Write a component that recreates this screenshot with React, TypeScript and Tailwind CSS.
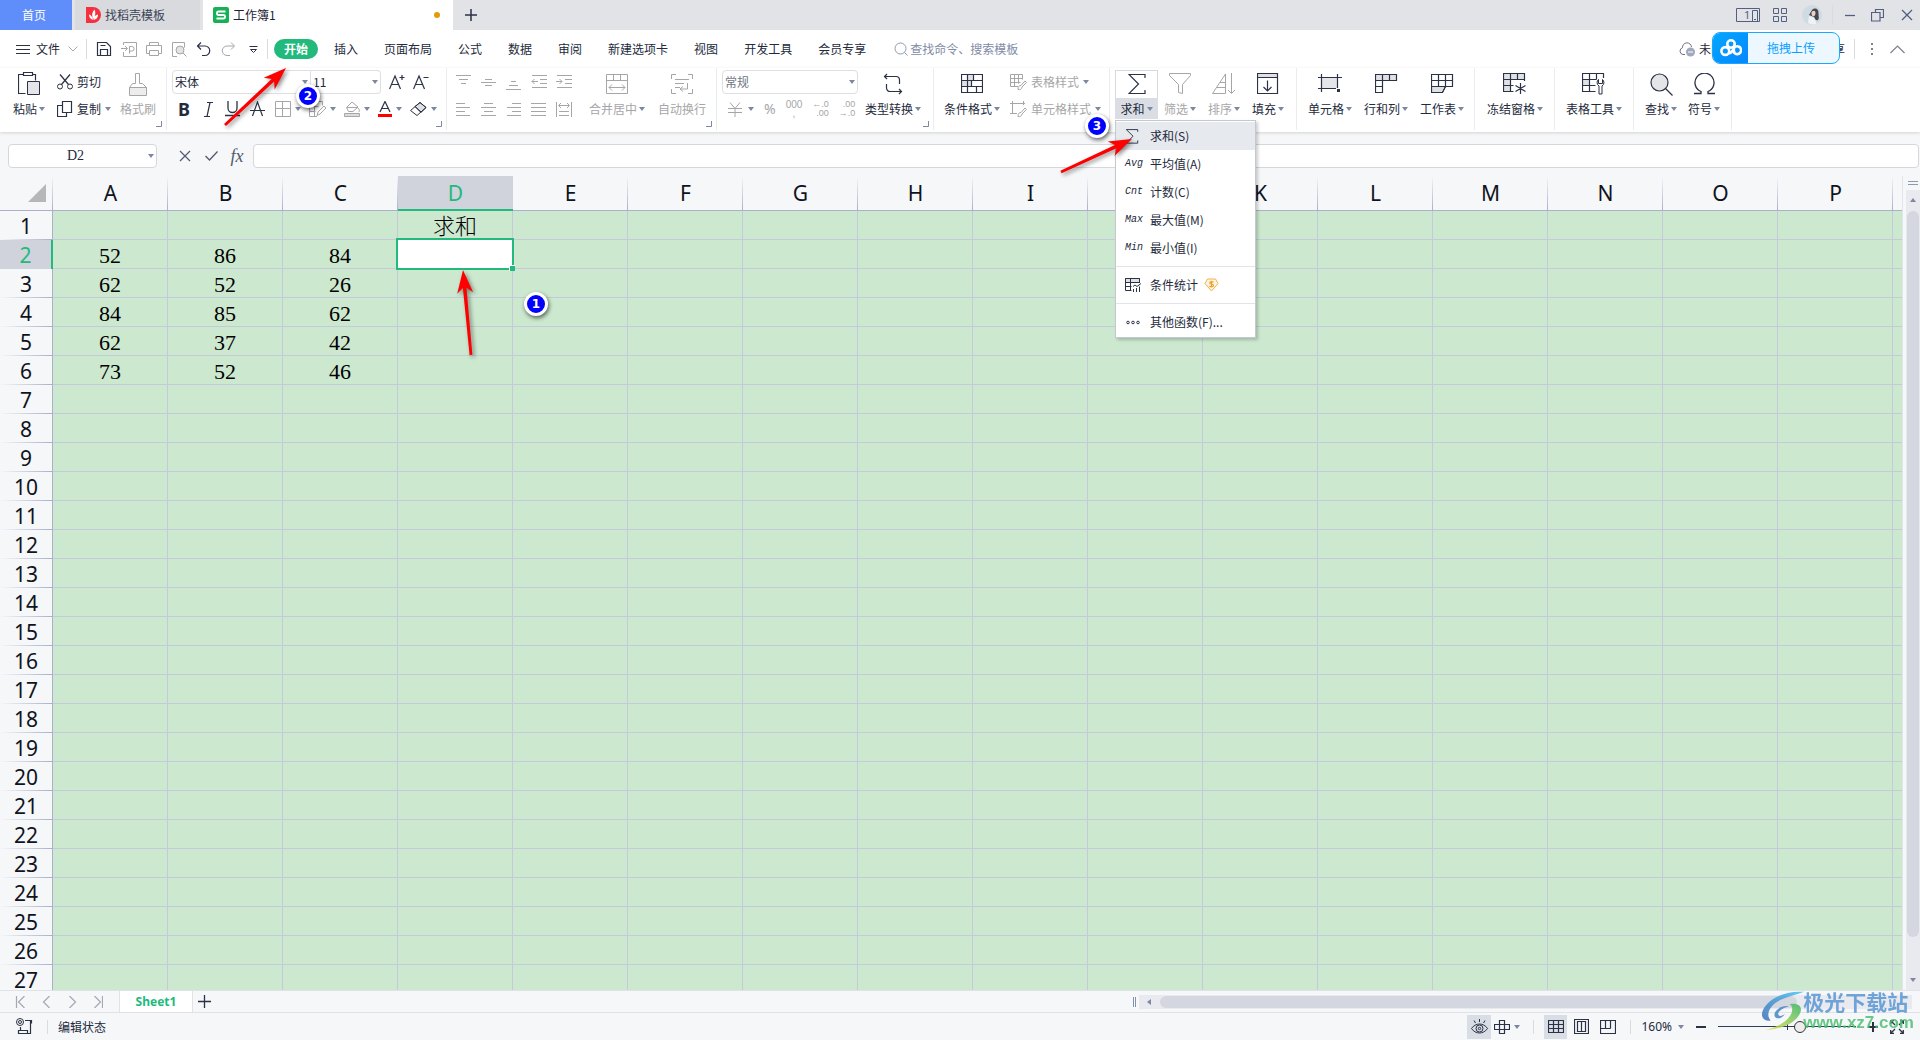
import { ReactNode } from 'react'
import clsx from 'clsx'

const INK = '#2b3245'
const MUTED = '#a6a6a8'

interface IconProps {
  w: number
  h: number
  color?: string
  children: ReactNode
}

const Icon = ({ w, h, color = INK, children }: IconProps) => (
  <svg
    width={w}
    height={h}
    viewBox={`0 0 ${w} ${h}`}
    fill="none"
    stroke={color}
    strokeWidth={1}
    className="shrink-0"
    aria-hidden="true"
  >
    {children}
  </svg>
)

const Caret = () => (
  <svg width="6" height="4" viewBox="0 0 6 4" className="shrink-0" aria-hidden="true">
    <path d="M0 0h6L3 4z" fill="#7d879f" />
  </svg>
)

const Corner = () => (
  <button aria-label="更多设置" className="absolute right-1 bottom-1 p-px">
    <Icon w={6} h={6} color="#7d879f">
      <path d="M5.5 0v5.5H0" />
    </Icon>
  </button>
)

const Divider = ({ className }: { className?: string }) => (
  <span className={clsx('w-px shrink-0 bg-[#d9dbe0]', className)} />
)

/* ---------- quick access ---------- */

const quickActions: { name: string; icon: ReactNode }[] = [
  {
    name: '保存',
    icon: (
      <Icon w={16} h={16}>
        <path d="M1.5 1.5h9l4 4v9h-13zM4.5 14.5v-6h7v6M4.5 4.5h5" strokeWidth="1.2" />
      </Icon>
    ),
  },
  {
    name: '输出为PDF',
    icon: (
      <Icon w={16} h={16} color={MUTED}>
        <path d="M2.5 4V1.5h13v14h-13V11M0 7.5h6M4 5l2.5 2.5L4 10M8.5 12.5v-7h2.3a2.3 2.3 0 010 4.6H8.5" />
      </Icon>
    ),
  },
  {
    name: '打印',
    icon: (
      <Icon w={16} h={16} color={MUTED}>
        <path d="M3.5 4V1.5h9V4M3.5 12.5h-3v-8h15v8h-3M3.5 9.5h9v5h-9z" />
      </Icon>
    ),
  },
  {
    name: '打印预览',
    icon: (
      <Icon w={16} h={16} color={MUTED}>
        <path d="M6 15.5H1.5v-14h12v5" />
        <circle cx="9" cy="9" r="4" fill="#e4e4e6" />
        <path d="M12 12l3.5 3.5" />
      </Icon>
    ),
  },
  {
    name: '撤销',
    icon: (
      <Icon w={15} h={15}>
        <path d="M5 .5L1.5 4 5 7.5M2 4h7a4.7 4.7 0 010 9.5H6" strokeWidth="1.2" />
      </Icon>
    ),
  },
  {
    name: '恢复',
    icon: (
      <Icon w={15} h={15} color={MUTED}>
        <path d="M10 .5L13.5 4 10 7.5M13 4H6a4.7 4.7 0 000 9.5h3" />
      </Icon>
    ),
  },
  {
    name: '自定义快速访问',
    icon: (
      <Icon w={9} h={9}>
        <path d="M.5 1.5h8M1.5 4.5h6l-3 3z" />
      </Icon>
    ),
  },
]

const menuTabs = ['插入', '页面布局', '公式', '数据', '审阅', '新建选项卡', '视图', '开发工具', '会员专享']

/* ---------- ribbon icons ---------- */

const pasteIcon = (
  <Icon w={22} h={24}>
    <path d="M5.5 2.5h-5v19h7M14.5 2.5h3v6M5.5.5h9v3h-9z" strokeWidth="1.2" />
    <path d="M9.5 9.5h12v13h-12z" fill="#e4e5e9" />
  </Icon>
)

const painterIcon = (
  <Icon w={20} h={25} color={MUTED}>
    <path d="M7.5 11.5v-10h4v10h3l4 4h-17l3-4z" />
    <path d="M1.5 15.5h17v8h-17z" fill="#ededee" />
  </Icon>
)

const cutIcon = (
  <Icon w={16} h={16}>
    <circle cx="3" cy="12.5" r="2.5" />
    <circle cx="13" cy="12.5" r="2.5" />
    <path d="M4.5 10.5L13 .5M11.5 10.5L3 .5" strokeWidth="1.2" />
  </Icon>
)

const copyIcon = (
  <Icon w={16} h={16}>
    <path d="M5.5.5h9v11h-9zM5.5 4.5h-5v11h9v-4" strokeWidth="1.2" />
  </Icon>
)

const mergeIcon = (
  <Icon w={22} h={20} color={MUTED}>
    <path d="M.5.5h21v19H.5zM.5 6.5h21M7.5.5v6M14.5.5v6M3 13.5h16M6 10.5l-3 3 3 3M16 10.5l3 3-3 3" />
  </Icon>
)

const wrapIcon = (
  <Icon w={22} h={20} color={MUTED}>
    <path d="M5 .5H.5V5M17 .5h4.5V5M5 19.5H.5V15M17 19.5h4.5V15M4 5.5h14M4 9.5h9M4 13.5h5M16.5 9v6H9M12 12.5L9 15l3 2.5" />
  </Icon>
)

const convertIcon = (
  <Icon w={20} h={22}>
    <path
      d="M4 1L1.5 3.5 4 6M2 3.5h11A3.5 3.5 0 0116.5 7v4M16 21l2.5-2.5L16 16M18 18.5H7A3.5 3.5 0 013.5 15v-4"
      strokeWidth="1.2"
    />
  </Icon>
)

const conditionIcon = (
  <Icon w={22} h={20}>
    <path d="M6.5.5h6v6h-6zM.5 6.5h10v6H.5z" fill="#e0e1e5" stroke="none" />
    <path d="M.5.5h21v18H.5zM.5 6.5h21M.5 12.5h21M6.5.5v18M12.5.5v6M10.5 6.5v6M15.5 12.5v6" strokeWidth="1.2" />
  </Icon>
)

const sigmaIcon = (
  <Icon w={18} h={21}>
    <path d="M17 4V.5H1L10.5 10 1 19.5h16V16" strokeWidth="1.2" />
  </Icon>
)

const filterIcon = (
  <Icon w={22} h={22} color={MUTED}>
    <path d="M.5.5h21v2l-8 9v9l-4-1v-8l-9-9z" />
  </Icon>
)

const sortIcon = (
  <Icon w={24} h={22} color={MUTED}>
    <path d="M13.5 20.5V1L.5 20.5zM5 14.5h8.5M8 9.5h5.5M19.5 0v20M16 17l3.5 3.5L23 17" />
  </Icon>
)

const fillIcon = (
  <Icon w={22} h={22}>
    <path d="M.5.5h20v4H.5z" fill="#e0e1e5" />
    <path d="M.5.5h20v20H.5zM10.5 7.5v10M6.5 14l4 4 4-4" strokeWidth="1.2" />
  </Icon>
)

const cellIcon = (
  <Icon w={24} h={20}>
    <path d="M3.5 3.5h16v11h-16z" fill="#e4e5e9" stroke="none" />
    <path d="M0 3.5h24M3.5 0v18M19.5 0v14M0 14.5h18" strokeWidth="1.2" />
    <path d="M19 15h3v3h-3z" fill={INK} stroke="none" />
  </Icon>
)

const rowColIcon = (
  <Icon w={23} h={20}>
    <path d="M.5.5h21v6H.5z" fill="#e0e1e5" />
    <path d="M.5.5h21v6h-14v12h-7zM7.5.5v6M14.5.5v6M.5 6.5h7M.5 12.5h7" strokeWidth="1.2" />
  </Icon>
)

const sheetIcon = (
  <Icon w={23} h={20}>
    <path d="M.5 12.5h14l-3 6H.5z" fill="#e0e1e5" />
    <path d="M.5.5h21v12H.5zM.5 6.5h21M7.5.5v12M14.5.5v12M.5 12.5v6h11l3-6" strokeWidth="1.2" />
  </Icon>
)

const freezeIcon = (
  <Icon w={24} h={22}>
    <path d="M.5.5h21v6h-14v12h-7z" fill="#e0e1e5" stroke="none" />
    <path
      d="M21.5 8V.5H.5v18h10M.5 6.5h21M7.5.5v18M14.5.5v6M.5 12.5h10M17.5 10v11M12.5 12.5l10 6M22.5 12.5l-10 6"
      strokeWidth="1.2"
    />
  </Icon>
)

const toolsIcon = (
  <Icon w={24} h={22}>
    <path d="M.5 6.5h7v6h-7z" fill="#e0e1e5" stroke="none" />
    <path d="M21.5 5V.5H.5v18h13M.5 6.5h14M7.5.5v18M14.5.5v6M.5 12.5h13" strokeWidth="1.2" />
    <path d="M16.5 6.5A4 4 0 0017 13v8h3v-8a4 4 0 00.5-6.5v4h-4z" fill="#fff" />
  </Icon>
)

const findIcon = (
  <Icon w={23} h={23}>
    <circle cx="9.5" cy="9.5" r="8.5" fill="#e4e5e9" strokeWidth="1.2" />
    <path d="M15.5 15.5l7 7" strokeWidth="1.2" />
  </Icon>
)

const omegaIcon = (
  <Icon w={21} h={22}>
    <path d="M0 20.5h7v-2a9.5 9.5 0 117 0v2h7" strokeWidth="1.3" />
  </Icon>
)

const tableStyleIcon = (
  <Icon w={17} h={17} color={MUTED}>
    <path d="M8 12.5H.5V.5h12v5M.5 4.5h12M.5 8.5h10M4.5.5v12M8.5.5v9M8 15.5c0-3 1-4 3-4L15 7l1.5 1.5L12 13c0 2-2 3-4 2.5z" />
  </Icon>
)

const cellStyleIcon = (
  <Icon w={17} h={17} color={MUTED}>
    <path d="M0 2.5h15M2.5 0v13M13.5 0v4M0 12.5h7M8 15.5c0-3 1-4 3-4L15 7l1.5 1.5L12 13c0 2-2 3-4 2.5z" />
  </Icon>
)

/* each line is [x1, x2, y] */
const lineIcon = (lines: number[][]) => (
  <Icon w={15} h={15} color={MUTED}>
    {lines.map(([a, b, y]) => (
      <path key={y} d={`M${a} ${y + 0.5}H${b}`} />
    ))}
  </Icon>
)

const alignTop = [
  { name: '顶端对齐', icon: lineIcon([[0, 15, 0], [3, 12, 4], [5, 10, 8]]) },
  { name: '垂直居中', icon: lineIcon([[4, 11, 4], [0, 15, 7], [4, 11, 10]]) },
  { name: '底端对齐', icon: lineIcon([[5, 10, 6], [3, 12, 10], [0, 15, 14]]) },
  {
    name: '减少缩进量',
    icon: (
      <Icon w={16} h={15} color={MUTED}>
        <path d="M1 .5h15M9 4.5h7M9 8.5h7M1 12.5h15M1 6.5h6M3.5 4L1 6.5 3.5 9" />
      </Icon>
    ),
  },
  {
    name: '增加缩进量',
    icon: (
      <Icon w={16} h={15} color={MUTED}>
        <path d="M1 .5h15M9 4.5h7M9 8.5h7M1 12.5h15M0 6.5h6M3.5 4L6 6.5 3.5 9" />
      </Icon>
    ),
  },
]

const alignBottom = [
  { name: '左对齐', icon: lineIcon([[0, 9, 1], [0, 14, 5], [0, 9, 9], [0, 14, 13]]) },
  { name: '水平居中', icon: lineIcon([[3, 12, 1], [0, 15, 5], [3, 12, 9], [0, 15, 13]]) },
  { name: '右对齐', icon: lineIcon([[6, 15, 1], [1, 15, 5], [6, 15, 9], [1, 15, 13]]) },
  { name: '两端对齐', icon: lineIcon([[0, 15, 1], [0, 15, 5], [0, 15, 9], [0, 15, 13]]) },
  {
    name: '分散对齐',
    icon: (
      <Icon w={16} h={15} color={MUTED}>
        <path d="M.5 0v15M15.5 0v15M3 3.5h10M5 1L2.5 3.5 5 6M11 1l2.5 2.5L11 6M3 9.5h10M3 13.5h10" />
      </Icon>
    ),
  },
]

const borderIcon = (
  <Icon w={16} h={16} color={MUTED}>
    <path d="M.5.5h15v15H.5zM7.5.5v15M.5 7.5h15" />
  </Icon>
)

const drawIcon = (
  <Icon w={17} h={16} color={MUTED}>
    <path d="M8 15.5H.5V.5h13v4M.5 5.5h9M5.5.5v15M.5 10.5h6M8 14.5L9 11l6-6 2 2-6 6z" />
  </Icon>
)

const bucketIcon = (
  <Icon w={16} h={16} color={MUTED}>
    <path d="M2.5 6.5L8 1l6 5-5 4.5H4.5zM3 6.5h11M14 7c2 2 1.5 4 .5 4" />
    <path d="M.5 12.5h15v3H.5z" fill="#dcdcde" />
  </Icon>
)

const eraserIcon = (
  <Icon w={17} h={15}>
    <path d="M5 4.5l5-4 6 5-5 5z" fill="#dfe0e4" />
    <path d="M.5 8.5L10 .5l6 5-9 8zM5 4.5l6 5.5" />
  </Icon>
)

interface RibbonButtonProps {
  label: string
  icon: ReactNode
  muted?: boolean
  caret?: boolean
}

const BigButton = ({ label, icon, muted, caret = true }: RibbonButtonProps) => (
  <button className="flex flex-col items-center whitespace-nowrap">
    <span className="flex h-7 items-center">{icon}</span>
    <span className={clsx('flex h-[21px] items-center gap-[2px]', muted && 'text-[#a6a6a8]')}>
      {label}
      {caret && <Caret />}
    </span>
  </button>
)

const SmallButton = ({ label, icon, muted, caret = true }: RibbonButtonProps) => (
  <button className={clsx('flex h-6 items-center gap-1 whitespace-nowrap', muted && 'text-[#a6a6a8]')}>
    {icon}
    <span>{label}</span>
    {caret && <Caret />}
  </button>
)

const Group = ({ className, children }: { className?: string; children: ReactNode }) => (
  <div className={clsx('relative flex h-16 shrink-0 items-start pt-[2px]', className)}>
    {children}
    <span className="absolute top-0 right-0 h-[62px] w-px bg-[#ebecee]" />
  </div>
)

const Combo = ({ label, value, className }: { label: string; value: string; className: string }) => (
  <span className="relative flex items-center">
    <select
      aria-label={label}
      className={clsx('h-6 appearance-none border border-[#dddfe3] bg-white pl-[2px] text-xs outline-none', className)}
    >
      <option>{value}</option>
    </select>
    <span className="pointer-events-none absolute right-[3px]">
      <Caret />
    </span>
  </span>
)

/* ---------- sum menu ---------- */

const sumItems = [
  { mark: 'Avg', label: '平均值(A)' },
  { mark: 'Cnt', label: '计数(C)' },
  { mark: 'Max', label: '最大值(M)' },
  { mark: 'Min', label: '最小值(I)' },
]

const menuRow = 'flex h-7 w-full items-center text-left'
const menuMark = 'flex w-[34px] shrink-0 pl-[9px]'

const SumMenu = () => (
  <div
    role="menu"
    className="absolute top-[50px] left-0 z-30 w-[141px] border border-[#c4c8cf] bg-white py-px text-xs shadow-[2px_2px_3px_rgba(0,0,0,0.2)]"
  >
    <button role="menuitem" className={clsx(menuRow, 'bg-[#e6e9ed]')}>
      <span className={menuMark}>
        <svg width="14" height="15" viewBox="0 0 18 21" fill="none" stroke={INK} strokeWidth="1.3" aria-hidden="true">
          <path d="M17 4V.8H1L10.5 10 1 19.8h16V16" />
        </svg>
      </span>
      求和(S)
    </button>
    {sumItems.map((item) => (
      <button key={item.mark} role="menuitem" className={menuRow}>
        <span className={clsx(menuMark, "font-['Liberation_Mono',monospace] text-[10px] italic")}>{item.mark}</span>
        {item.label}
      </button>
    ))}
    <hr className="my-1 border-[#e2e4e8]" />
    <button role="menuitem" className={menuRow}>
      <span className={menuMark}>
        <Icon w={17} h={15}>
          <path d="M.5.5h14v4H.5z" fill="#e0e1e5" />
          <path d="M14.5 5V.5H.5v12h6M.5 4.5h14M.5 8.5h6M5.5.5v12M8.5 14v-3M11.5 14v-4M14.5 14V8.5M8 8.5L10 7l2 1.5 4-3" />
        </Icon>
      </span>
      条件统计
      <svg width="15" height="14" viewBox="0 0 15 14" className="ml-[6px]" aria-hidden="true">
        <path d="M3.5 1h8L14 5.5 7.5 13 1 5.5z" fill="#fff6e6" stroke="#f0b04a" />
        <path
          d="M9.5 4.3c-1-1-3.8-.8-3.8.7 0 1.6 3.8.8 3.8 2.5 0 1.4-2.8 1.6-4 .5M7.5 2.8v6.8"
          fill="none"
          stroke="#f0a02a"
          strokeWidth="1.2"
        />
      </svg>
    </button>
    <hr className="my-1 border-[#e2e4e8]" />
    <button role="menuitem" className={menuRow}>
      <span className={menuMark}>
        <Icon w={16} h={5}>
          <circle cx="3" cy="2.5" r="1.3" />
          <circle cx="8" cy="2.5" r="1.3" />
          <circle cx="13" cy="2.5" r="1.3" />
        </Icon>
      </span>
      其他函数(F)...
    </button>
  </div>
)

/* ---------- sections ---------- */

const TitleBar = () => (
  <header className="flex h-[30px] shrink-0 items-stretch bg-[#e1e3e7] text-xs">
    <button className="w-[72px] bg-[#5f8efb] pr-1 text-white">首页</button>
    <button className="ml-[3px] flex w-[125px] items-center gap-1 bg-[#d8dade] pl-[11px] text-[#3c4356]">
      <svg width="15" height="16" viewBox="0 0 15 16" aria-hidden="true">
        <path d="M0 0h7a8 8 0 010 16H0z" fill="#f5313f" />
        <path
          d="M7 13c-3-1-4-3-4-5.5C5 8 6.5 9.5 7 13zM7 12C5.5 8 6 5 8.5 2.5 10 5.5 9.5 9 7 12zM7.5 13c0-3 1.5-5 4.500-5.5 0 3-1.5 5-4.500 5.5z"
          fill="#fff"
        />
      </svg>
      找稻壳模板
    </button>
    <button className="ml-[3px] flex w-[250px] items-center gap-1 bg-white pr-[13px] pl-[10px] text-[#1c2233]">
      <svg width="16" height="16" viewBox="0 0 16 16" aria-hidden="true">
        <rect width="16" height="16" rx="2" fill="#16b055" />
        <path d="M12.5 4.5h-7a1.5 1.7 0 000 3.5h5a1.5 1.7 0 010 3.5h-7" fill="none" stroke="#fff" strokeWidth="1.8" />
      </svg>
      工作簿1
      <span className="ml-auto size-[6px] rounded-full bg-[#e69a07]" />
    </button>
    <button aria-label="新建标签" className="px-3">
      <Icon w={12} h={12}>
        <path d="M6 0v12M0 6h12" strokeWidth="1.5" />
      </Icon>
    </button>
    <div className="ml-auto flex items-center pr-[7px]">
      <button aria-label="窗口布局">
        <svg width="24" height="15" viewBox="0 0 24 15" fill="none" stroke="#525f7e" aria-hidden="true">
          <path d="M.5.5h23v13H.5zM16.5 2.5h5v11h-5zM18 11.5h2" />
          <text x="8" y="11" fontSize="11" fill="#525f7e" stroke="none" fontFamily="Noto Sans">
            1
          </text>
        </svg>
      </button>
      <button aria-label="应用" className="ml-[13px]">
        <Icon w={14} h={14} color="#525f7e">
          <path d="M.5.5h5v5h-5zM8.5.5h5v5h-5zM.5 8.5h5v5h-5zM8.5 8.5h5v5h-5z" />
        </Icon>
      </button>
      <button aria-label="账户" className="ml-[15px]">
        <svg width="20" height="20" viewBox="0 0 20 20" aria-hidden="true">
          <circle cx="10" cy="10" r="10" fill="#cfdbe2" />
          <path d="M10 5c3-3 7-1 6.5 3 0 4 1 5-.5 7-2 1-3-1-4-3l-5-2z" fill="#4a4650" />
          <path d="M10 6.5c2-1.5 3.5-.5 3.5 1.5s-1 3.5-2.500 3.2S9 8 10 6.500z" fill="#ecd2c8" />
          <path d="M7 11l5 1.5 2.5 6c-3 1.500-6 1-8.500-.5z" fill="#eef3f6" />
        </svg>
      </button>
      <Divider className="ml-[10px] h-5 bg-[#c5c9d1]" />
      <button aria-label="最小化" className="ml-3">
        <Icon w={10} h={11} color="#525f7e">
          <path d="M0 5.5h10" strokeWidth="1.3" />
        </Icon>
      </button>
      <button aria-label="还原" className="ml-4">
        <Icon w={13} h={13} color="#525f7e">
          <path d="M4.5 3V.5h8v8H9M.5 3.5H9V12H.5z" strokeWidth="1.2" />
        </Icon>
      </button>
      <button aria-label="关闭" className="ml-[17px]">
        <Icon w={12} h={12} color="#525f7e">
          <path d="M1 1l10 10M11 1L1 11" strokeWidth="1.3" />
        </Icon>
      </button>
    </div>
  </header>
)

const MenuBar = () => (
  <nav className="relative flex h-[38px] shrink-0 items-center pl-4 text-xs">
    <button className="flex items-center gap-[6px]">
      <Icon w={14} h={11}>
        <path d="M0 1.5h14M0 5.5h14M0 9.5h14" />
      </Icon>
      文件
      <span className="pl-[2px]">
        <Icon w={10} h={6} color={MUTED}>
          <path d="M.5.5L5 5 9.5.5" />
        </Icon>
      </span>
    </button>
    <Divider className="mr-1 ml-2 h-5" />
    <div className="flex items-center">
      {quickActions.map((action) => (
        <button key={action.name} aria-label={action.name} className="flex w-[25px] justify-center">
          {action.icon}
        </button>
      ))}
    </div>
    <Divider className="ml-px h-5" />
    <button className="ml-[6px] h-5 w-11 rounded-full bg-[#22b97d] font-bold text-white">开始</button>
    <div className="flex items-center gap-[26px] pl-4 whitespace-nowrap">
      {menuTabs.map((tab) => (
        <button key={tab}>{tab}</button>
      ))}
    </div>
    <label className="ml-7 flex items-center gap-[2px]">
      <Icon w={14} h={14} color="#8c9ab5">
        <circle cx="6.5" cy="6.5" r="5.5" />
        <path d="M10.5 10.5l3 3" />
      </Icon>
      <input
        aria-label="查找命令"
        placeholder="查找命令、搜索模板"
        className="w-[120px] bg-transparent outline-none placeholder:text-[#7f8ba6]"
      />
    </label>
    <div className="ml-auto flex items-center pr-[15px] whitespace-nowrap">
      <button className="flex items-center gap-1">
        <Icon w={16} h={15} color="#6b7285">
          <path d="M6 12.5H4a3.5 3.5 0 01-.5-6.8A4.5 4.5 0 0112.5 5" />
          <circle cx="11.5" cy="10" r="4.5" fill="#a0a8bb" stroke="none" />
          <path d="M9 10h5" stroke="#fff" />
        </Icon>
        未同步
      </button>
      <button className="ml-[86px]">分享</button>
      <Divider className="ml-[9px] h-5" />
      <button aria-label="更多" className="ml-4">
        <svg width="3" height="12" viewBox="0 0 3 12" fill="#7c8190" aria-hidden="true">
          <path d="M0 0h2v2H0zM0 5h2v2H0zM0 10h2v2H0z" />
        </svg>
      </button>
      <button aria-label="收起功能区" className="ml-4">
        <Icon w={15} h={9} color="#7c8190">
          <path d="M.5 8l7-7 7 7" strokeWidth="1.2" />
        </Icon>
      </button>
    </div>
    <button className="absolute top-[2px] right-20 z-20 flex h-8 w-32 items-stretch overflow-hidden rounded-lg border border-[#1ba6ff] bg-[#ecf7ff] text-[#0a9fff]">
      <span className="flex w-[35px] shrink-0 items-center justify-center bg-linear-to-br from-[#06a7ff] to-[#0886ff]">
        <svg width="22" height="18" viewBox="0 0 22 18" fill="none" stroke="#fff" strokeWidth="2.6" aria-hidden="true">
          <circle cx="11" cy="5" r="3.7" />
          <circle cx="5.3" cy="12" r="3.9" />
          <path d="M13.3 8.3l1 5.5a3.9 3.9 0 10-.8-3.8M8.5 14.2c3-.2 4-1.7 5-4" />
        </svg>
      </span>
      <span className="flex flex-1 items-center justify-center pr-[5px]">拖拽上传</span>
    </button>
  </nav>
)

const Ribbon = () => (
  <section
    aria-label="功能区"
    className="relative z-10 flex h-16 shrink-0 bg-white text-xs shadow-[0_1px_3px_rgba(0,0,0,0.15)]"
  >
    <Group className="w-[167px] gap-3 pl-[13px]">
      <BigButton label="粘贴" icon={pasteIcon} />
      <div className="flex flex-col gap-[3px]">
        <SmallButton label="剪切" icon={cutIcon} caret={false} />
        <SmallButton label="复制" icon={copyIcon} />
      </div>
      <div className="-ml-[3px]">
        <BigButton label="格式刷" icon={painterIcon} muted caret={false} />
      </div>
      <Corner />
    </Group>

    <Group className="w-[280px] flex-col gap-[3px] pl-[5px]">
      <div className="flex items-center">
        <Combo label="字体" value="宋体" className="w-[139px] rounded-l" />
        <Combo label="字号" value="11" className="w-[70px] rounded-r border-l-0" />
        <button aria-label="增大字号" className="ml-2">
          <Icon w={16} h={16}>
            <path d="M.5 15L6 2l5.5 13M2.5 10.5h7M10.5 3.5h5M13 1v5" strokeWidth="1.2" />
          </Icon>
        </button>
        <button aria-label="减小字号" className="ml-2">
          <Icon w={16} h={16}>
            <path d="M.5 15L6 2l5.5 13M2.5 10.5h7M10.5 3.5h5" strokeWidth="1.2" />
          </Icon>
        </button>
      </div>
      <div className="flex h-6 items-center pl-[6px]">
        <button aria-label="加粗" className="w-3 font-['Noto_Sans',sans-serif] text-lg leading-6 font-bold">
          B
        </button>
        <button aria-label="倾斜" className="ml-[14px]">
          <Icon w={9} h={15}>
            <path d="M3 .5h6M0 14.5h6M6 .5l-3 14" strokeWidth="1.2" />
          </Icon>
        </button>
        <button aria-label="下划线" className="ml-3">
          <Icon w={15} h={16}>
            <path d="M3 0v7a4.5 4.5 0 009 0V0M0 14.5h15" strokeWidth="1.3" />
          </Icon>
        </button>
        <button aria-label="删除线" className="ml-[10px]">
          <Icon w={15} h={16}>
            <path d="M2.5 15l5-14 5 14M0 9.5h15" strokeWidth="1.2" />
          </Icon>
        </button>
        <button aria-label="边框" className="ml-[10px] flex items-center gap-1">
          {borderIcon}
          <Caret />
        </button>
        <button aria-label="绘图边框" className="ml-2 flex items-center gap-1">
          {drawIcon}
          <Caret />
        </button>
        <button aria-label="填充颜色" className="ml-2 flex items-center gap-1">
          {bucketIcon}
          <Caret />
        </button>
        <button aria-label="字体颜色" className="ml-2 flex items-center gap-1">
          <Icon w={14} h={16}>
            <path d="M2 11L7 .5 12 11M3.5 7.5h7" strokeWidth="1.2" />
            <path d="M0 14.5h14" stroke="#f00" strokeWidth="3" />
          </Icon>
          <Caret />
        </button>
        <button aria-label="清除" className="ml-2 flex items-center gap-1">
          {eraserIcon}
          <Caret />
        </button>
      </div>
      <Corner />
    </Group>

    <Group className="w-[270px] gap-2 pl-[9px]">
      <div className="flex flex-col gap-[3px]">
        {[alignTop, alignBottom].map((row, i) => (
          <div key={i} className="flex h-6 items-center">
            {row.map((item) => (
              <button key={item.name} aria-label={item.name} className="flex w-[25px]">
                {item.icon}
              </button>
            ))}
          </div>
        ))}
      </div>
      <div className="flex gap-[13px]">
        <BigButton label="合并居中" icon={mergeIcon} muted />
        <BigButton label="自动换行" icon={wrapIcon} muted caret={false} />
      </div>
      <Corner />
    </Group>

    <Group className="w-[217px] gap-[7px] pl-[5px]">
      <div className="flex flex-col gap-[3px]">
        <Combo label="数字格式" value="常规" className="w-[136px] rounded text-[#707784]" />
        <div className="flex h-6 items-center gap-[10px] pl-[6px] text-[#a6a6a8]">
          <button aria-label="货币" className="flex items-center gap-[6px]">
            <Icon w={14} h={15} color={MUTED}>
              <path d="M2 .5l5 6 5-6M7 6.5V15M0 6.5h14M0 10.5h14" />
            </Icon>
            <Caret />
          </button>
          <button aria-label="百分比" className="font-['Noto_Sans',sans-serif] text-sm">
            %
          </button>
          <button className="flex flex-col items-center font-['Liberation_Sans',sans-serif] text-[10px] leading-[9px]">
            <span>000</span>
            <span>,</span>
          </button>
          <button className="flex flex-col items-end font-['Liberation_Sans',sans-serif] text-[9px] leading-[9px]">
            <span>←.0</span>
            <span>.00</span>
          </button>
          <button className="flex flex-col items-end font-['Liberation_Sans',sans-serif] text-[9px] leading-[9px]">
            <span>.00</span>
            <span>→.0</span>
          </button>
        </div>
      </div>
      <BigButton label="类型转换" icon={convertIcon} />
      <Corner />
    </Group>

    <Group className="w-[176px] gap-[10px] pl-[10px]">
      <BigButton label="条件格式" icon={conditionIcon} />
      <div className="flex flex-col gap-[3px]">
        <SmallButton label="表格样式" icon={tableStyleIcon} muted />
        <SmallButton label="单元格样式" icon={cellStyleIcon} muted />
      </div>
    </Group>

    <Group className="w-[187px] gap-[6px] pl-[5px]">
      <div className="relative w-[43px]">
        <button
          className="flex w-full flex-col items-center whitespace-nowrap"
          aria-haspopup="menu"
          aria-expanded="true"
        >
          <span className="flex h-7 w-full items-center justify-center border border-b-0 border-[#d6dae0]">
            {sigmaIcon}
          </span>
          <span className="flex h-[21px] w-full items-center justify-center gap-[2px] bg-[#dadee4]">
            求和
            <Caret />
          </span>
        </button>
        <SumMenu />
      </div>
      <div className="flex gap-3">
        <BigButton label="筛选" icon={filterIcon} muted />
        <BigButton label="排序" icon={sortIcon} muted />
        <BigButton label="填充" icon={fillIcon} />
      </div>
    </Group>

    <Group className="gap-3 px-[11px]">
      <BigButton label="单元格" icon={cellIcon} />
      <BigButton label="行和列" icon={rowColIcon} />
      <BigButton label="工作表" icon={sheetIcon} />
    </Group>
    <Group className="px-3">
      <BigButton label="冻结窗格" icon={freezeIcon} />
    </Group>
    <Group className="pr-3 pl-[11px]">
      <BigButton label="表格工具" icon={toolsIcon} />
    </Group>
    <Group className="gap-[11px] pr-3 pl-[11px]">
      <BigButton label="查找" icon={findIcon} />
      <BigButton label="符号" icon={omegaIcon} />
    </Group>
  </section>
)

const FormulaBar = () => (
  <div className="flex h-11 shrink-0 items-start pt-3 pr-px pl-2">
    <span className="relative flex items-center">
      <input
        aria-label="名称框"
        defaultValue="D2"
        className="h-6 w-[149px] rounded border border-[#d5d7dd] bg-white pr-[14px] text-center font-['Liberation_Serif',serif] text-sm outline-none"
      />
      <span className="absolute right-[3px]">
        <Caret />
      </span>
    </span>
    <div className="flex h-6 items-center pl-[22px]">
      <button aria-label="取消">
        <Icon w={12} h={12} color="#525a6e">
          <path d="M1 1l10 10M11 1L1 11" strokeWidth="1.2" />
        </Icon>
      </button>
      <button aria-label="确认" className="ml-[14px]">
        <Icon w={13} h={10} color="#525a6e">
          <path d="M.5 5l4 4 8-8.5" strokeWidth="1.3" />
        </Icon>
      </button>
      <button
        aria-label="插入函数"
        className="ml-[11px] w-4 font-['Liberation_Serif',serif] text-lg leading-6 text-[#525a6e] italic"
      >
        fx
      </button>
    </div>
    <input
      aria-label="编辑栏"
      className="ml-2 h-6 min-w-0 flex-1 rounded border border-[#d5d7dd] bg-white px-2 outline-none"
    />
  </div>
)

const columns = 'ABCDEFGHIJKLMNOP'.split('')
const rowCount = 27

const cells: Record<string, string> = {
  D1: '求和',
  A2: '52', B2: '86', C2: '84',
  A3: '62', B3: '52', C3: '26',
  A4: '84', B4: '85', C4: '62',
  A5: '62', B5: '37', C5: '42',
  A6: '73', B6: '52', C6: '46',
}

const headerLine =
  'border-b border-b-[#aab0cb] bg-[linear-gradient(to_top,#aab0cb,transparent)] bg-[length:1px_100%] bg-right bg-no-repeat'
const rowLine =
  'border-r border-r-[#aab0cb] bg-[linear-gradient(to_left,#aab0cb,transparent)] bg-[length:100%_1px] bg-bottom bg-no-repeat'

const Sheet = () => (
  <div className="flex min-h-0 flex-1">
    <div className="min-w-0 flex-1 overflow-hidden">
      <table className="w-full table-fixed border-separate border-spacing-0 font-['Noto_Sans',sans-serif] text-[21px] leading-6 text-[#10131c]">
        <colgroup>
          <col className="w-[53px]" />
          {columns.map((c) => (
            <col key={c} className="w-[115px]" />
          ))}
          <col />
        </colgroup>
        <thead>
          <tr className="h-[35px]">
            <th className={headerLine}>
              <button aria-label="全选" className="ml-auto mr-[7px] flex">
                <svg width="18" height="18" viewBox="0 0 18 18" aria-hidden="true">
                  <path d="M18 0v18H0z" fill="#b7b7b7" />
                </svg>
              </button>
            </th>
            {columns.map((c) => (
              <th
                key={c}
                scope="col"
                className={clsx(
                  'p-0 font-normal',
                  c === 'D' ? 'border-b-2 border-[#22b97d] bg-[#d0d3dc] text-[#22b97d]' : headerLine,
                )}
              >
                {c}
              </th>
            ))}
            <th className="border-b border-[#aab0cb]" />
          </tr>
        </thead>
        <tbody>
          {Array.from({ length: rowCount }, (_, i) => i + 1).map((row) => (
            <tr key={row} className="h-[29px]">
              <th
                scope="row"
                className={clsx(
                  'p-0 font-normal',
                  row === 2 ? 'border-r-2 border-[#22b97d] bg-[#d0d3dc] text-[#22b97d]' : rowLine,
                )}
              >
                {row}
              </th>
              {columns.map((c) => (
                <td
                  key={c}
                  className="relative border-r border-b border-[#c4c9dc] bg-[#cce8cf] p-0 pt-1 text-center font-['Liberation_Serif','Noto_Sans_CJK_SC',serif] text-[22px] font-light text-black"
                >
                  {cells[`${c}${row}`]}
                  {c === 'D' && row === 2 && (
                    <span className="absolute -inset-[2px] z-10 border-2 border-[#22b97d] bg-white">
                      <span className="absolute -right-[3px] -bottom-[3px] size-[6px] border-t border-l border-white bg-[#22b97d]" />
                    </span>
                  )}
                </td>
              ))}
              <td className="border-b border-[#c4c9dc] bg-[#cce8cf]" />
            </tr>
          ))}
        </tbody>
      </table>
    </div>
    <div className="flex w-[18px] flex-col items-end border-l border-[#e2e4e8] pl-[3px]">
      <div className="flex h-[14px] w-full flex-col items-center justify-center gap-[2px]">
        <span className="h-px w-[10px] bg-[#8d99b2]" />
        <span className="h-px w-[10px] bg-[#8d99b2]" />
      </div>
      <div className="flex w-full flex-1 flex-col items-center bg-[#e9eaef] py-2">
        <svg width="6" height="4" viewBox="0 0 6 4" aria-hidden="true">
          <path d="M0 4h6L3 0z" fill="#7d879f" />
        </svg>
        <span className="mt-[9px] mb-[41px] w-3 flex-1 rounded-full bg-[#d4d7e0]" />
        <Caret />
      </div>
    </div>
  </div>
)

const sheetNav = [
  { name: '第一张', d: 'M1.5 0v12M9.5 0l-6 6 6 6' },
  { name: '上一张', d: 'M8.5 0l-6 6 6 6' },
  { name: '下一张', d: 'M2.5 0l6 6-6 6' },
  { name: '最后一张', d: 'M1.5 0l6 6-6 6M9.5 0v12' },
]

const SheetTabs = () => (
  <div className="flex h-[23px] shrink-0 items-stretch border-y border-[#e0e2e7] text-xs">
    <div className="flex w-[119px] items-center gap-4 pl-[15px]">
      {sheetNav.map((nav) => (
        <button key={nav.name} aria-label={nav.name}>
          <Icon w={10} h={12} color="#a4a8b2">
            <path d={nav.d} strokeWidth="1.2" />
          </Icon>
        </button>
      ))}
    </div>
    <button className="w-[74px] border-x border-[#e0e2e7] bg-white font-['Noto_Sans',sans-serif] font-bold text-[#22b97d]">
      Sheet1
    </button>
    <button aria-label="新建工作表" className="px-[5px]">
      <Icon w={13} h={13}>
        <path d="M6.5 0v13M0 6.5h13" strokeWidth="1.3" />
      </Icon>
    </button>
    <div className="ml-auto flex w-[41%] items-center pr-2">
      <div className="flex w-[6px] gap-px">
        <span className="h-[10px] w-px bg-[#8292ad]" />
        <span className="h-[10px] w-px bg-[#8292ad]" />
      </div>
      <div className="flex h-[14px] flex-1 items-center bg-[#e9eaef] pl-2">
        <svg width="4" height="6" viewBox="0 0 4 6" aria-hidden="true">
          <path d="M4 0v6L0 3z" fill="#7d879f" />
        </svg>
        <span className="ml-[9px] h-3 w-5/6 rounded-full bg-[#d4d7e0]" />
      </div>
    </div>
  </div>
)

const StatusBar = () => (
  <footer className="flex h-[27px] shrink-0 items-center px-4 text-xs">
    <button aria-label="宏录制">
      <Icon w={17} h={17}>
        <circle cx="4" cy="4" r="3.5" />
        <circle cx="4" cy="4" r="1.5" />
        <path d="M9 2.5h6.5v3M14.5 3v12.5h-12v-3h9v3M4.5 9v3" strokeWidth="1.2" />
      </Icon>
    </button>
    <Divider className="ml-[14px] h-[14px]" />
    <span className="ml-[10px]">编辑状态</span>
    <div className="ml-auto flex items-center">
      <button aria-label="护眼模式" className="flex h-6 w-6 items-center justify-center bg-[#d9dee6]">
        <Icon w={17} h={15}>
          <path d="M.5 9.5c4-6 12-6 16 0-4 6-12 6-16 0zM8.5 0v3M3 1.5L4.5 4M14 1.5L12.5 4" />
          <circle cx="8.5" cy="9.5" r="3.5" />
          <circle cx="8.5" cy="9.5" r="1.2" />
        </Icon>
      </button>
      <button aria-label="阅读模式" className="ml-[3px] flex items-center gap-1">
        <Icon w={16} h={14}>
          <path d="M5.5.5h5v13h-5zM.5 4.5h15v5H.5z" strokeWidth="1.2" />
        </Icon>
        <Caret />
      </button>
      <Divider className="mr-[10px] ml-[13px] h-[14px]" />
      <button aria-label="普通视图" className="flex h-6 w-[23px] items-center justify-center bg-[#d9dee6]">
        <Icon w={16} h={13}>
          <path d="M.5.5h15v12H.5zM.5 4.5h15M.5 8.5h15M5.5.5v12M10.5.5v12" strokeWidth="1.2" />
        </Icon>
      </button>
      <button aria-label="页面布局视图" className="ml-[7px]">
        <Icon w={15} h={15}>
          <path d="M.5.5h14v14H.5zM3.5 2.5h8v10h-8zM7.5 2.5v10" strokeWidth="1.2" />
        </Icon>
      </button>
      <button aria-label="分页预览" className="ml-[11px]">
        <Icon w={16} h={14}>
          <path d="M.5.5h15v13H.5zM5.5.5v8M10.5.5v8M.5 8.5h10" strokeWidth="1.2" />
        </Icon>
      </button>
      <Divider className="ml-[14px] h-[14px]" />
      <button className="ml-[10px] flex items-center gap-[6px] font-['Noto_Sans',sans-serif] text-xs">
        160%
        <Caret />
      </button>
      <button aria-label="缩小" className="ml-3">
        <Icon w={10} h={10}>
          <path d="M0 5h10" strokeWidth="2" />
        </Icon>
      </button>
      <span className="relative ml-3 flex w-[138px] items-center">
        <span className="absolute left-1/2 h-[6px] w-px bg-[#2b3245]" />
        <input
          type="range"
          aria-label="显示比例"
          min={0}
          max={100}
          defaultValue={60}
          className="h-3 w-full appearance-none bg-[linear-gradient(#2b3f5a,#2b3f5a)] bg-[length:100%_1px] bg-center bg-no-repeat [&::-webkit-slider-thumb]:size-3 [&::-webkit-slider-thumb]:appearance-none [&::-webkit-slider-thumb]:rounded-full [&::-webkit-slider-thumb]:border [&::-webkit-slider-thumb]:border-[#333] [&::-webkit-slider-thumb]:bg-[#efecee]"
        />
      </span>
      <button aria-label="放大" className="ml-3">
        <Icon w={10} h={10}>
          <path d="M0 5h10M5 0v10" strokeWidth="2" />
        </Icon>
      </button>
      <button aria-label="全屏" className="ml-3">
        <Icon w={14} h={14}>
          <path
            d="M.7 4V.7H4M10 .7h3.3V4M.7 10v3.3H4M10 13.3h3.3V10M1 1l4 4M13 1L9 5M1 13l4-4M13 13L9 9"
            strokeWidth="1.3"
          />
        </Icon>
      </button>
    </div>
  </footer>
)

/* ---------- tutorial marks ---------- */

const arrows = [
  { from: [471, 355], tip: [463, 270] },
  { from: [225, 125], tip: [286, 68] },
  { from: [1061, 172], tip: [1132, 139] },
]

const Arrow = ({ from, tip }: { from: number[]; tip: number[] }) => {
  const angle = (Math.atan2(tip[1] - from[1], tip[0] - from[0]) * 180) / Math.PI
  const length = Math.hypot(tip[0] - from[0], tip[1] - from[1])
  return (
    <path
      transform={`translate(${from[0]} ${from[1]}) rotate(${angle})`}
      d={`M0 -1.4L${length - 18} -1.8L${length - 23} -8L${length} 0L${length - 23} 8L${length - 18} 1.8L0 1.4z`}
      fill="#fe0000"
    />
  )
}

const badge =
  "absolute flex size-6 items-center justify-center rounded-full border-[3px] border-white bg-[#0000fe] font-['DejaVu_Sans',sans-serif] text-xs font-bold text-white shadow-[1px_2px_4px_rgba(0,0,0,0.6)]"

const Marks = () => (
  <div className="pointer-events-none absolute inset-0 z-40 overflow-hidden">
    <svg className="absolute inset-0 size-full drop-shadow-[2px_2px_2px_rgba(0,0,0,0.45)]" aria-hidden="true">
      {arrows.map((arrow) => (
        <Arrow key={arrow.from[0]} {...arrow} />
      ))}
    </svg>
    <span className={clsx(badge, 'top-[292px] left-[524px]')}>1</span>
    <span className={clsx(badge, 'top-[84px] left-[296px]')}>2</span>
    <span className={clsx(badge, 'top-[114px] left-[1085px]')}>3</span>
  </div>
)

const Watermark = () => (
  <div className="pointer-events-none absolute right-[6px] bottom-[7px] z-40 flex items-center opacity-85">
    <svg width="44" height="42" viewBox="0 0 46 42" aria-hidden="true">
      <defs>
        <linearGradient id="swoosh" x1="0" y1="1" x2="1" y2="0">
          <stop offset="0" stopColor="#3f6fb8" />
          <stop offset="1" stopColor="#4cc3f0" />
        </linearGradient>
        <linearGradient id="leaf" x1="0" y1="1" x2="1" y2="0">
          <stop offset="0" stopColor="#e9e04a" />
          <stop offset="1" stopColor="#38b768" />
        </linearGradient>
      </defs>
      <path d="M45 1C20-1 2 13 1 24c-.5 5 4 8 9 7-6-7 0-18 14-23 8-3 14-4 21-7z" fill="url(#swoosh)" />
      <path d="M30 14c8-2 14 2 11 9-4 9-16 17-37 18 14-3 25-10 28-18 1-4 1-7-2-9z" fill="url(#leaf)" />
      <path d="M29 16c-8-1-15 4-15 9s8 5 11-1c-3 3-7 3-7 0s5-6 11-8z" fill="#4a86c8" />
    </svg>
    <div className="-ml-[2px] flex flex-col whitespace-nowrap">
      <span className="text-[21px] leading-6 font-bold text-[#5a96d2]">极光下载站</span>
      <span className="font-['Liberation_Sans',sans-serif] text-[17px] leading-5 font-bold text-[#4fbf73]">
        www.xz7.com
      </span>
    </div>
  </div>
)

export default function App() {
  return (
    <div className="relative flex h-screen flex-col overflow-hidden bg-[#f5f7f9] font-['Noto_Sans_CJK_SC',sans-serif] text-[#232a3c]">
      <TitleBar />
      <div className="shrink-0 bg-white">
        <MenuBar />
      </div>
      <Ribbon />
      <FormulaBar />
      <Sheet />
      <SheetTabs />
      <StatusBar />
      <Marks />
      <Watermark />
    </div>
  )
}
